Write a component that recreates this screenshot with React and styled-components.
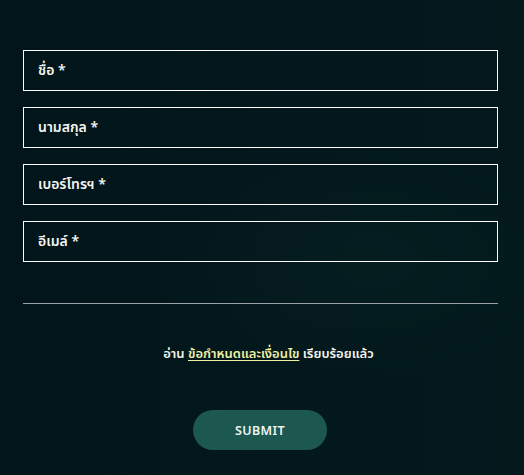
import React from "react";
import styled, { createGlobalStyle } from "styled-components";

const Global = createGlobalStyle`
  html, body { margin: 0; padding: 0; }
  body {
    background: #03171b;
    font-family: "Noto Sans Thai", "Noto Sans", "DejaVu Sans", sans-serif;
  }
`;

const Page = styled.div`
  width: 524px;
  height: 475px;
  box-sizing: border-box;
  padding: 50px 26px 0 23px;
  background:
    radial-gradient(ellipse 55% 35% at 70% 55%, rgba(18, 50, 50, 0.18), transparent 70%),
    linear-gradient(90deg, #02151a 0%, #03181c 50%, #03191c 100%);
  overflow: hidden;
`;

const Form = styled.form`
  display: flex;
  flex-direction: column;
  gap: 16px;
`;

const Field = styled.label`
  display: flex;
  align-items: center;
  height: 41px;
  box-sizing: border-box;
  border: 1px solid #ffffff;
  padding: 0 14px;
  color: #f4f5f2;
  font-size: 14px;
  font-weight: 600;
`;

const Divider = styled.hr`
  margin: 41px 0 0;
  border: none;
  height: 1px;
  background: #9aa3a3;
`;

const Terms = styled.p`
  margin: 40px 0 0;
  padding-left: 16px;
  text-align: center;
  color: #f4f5ec;
  font-size: 13px;
  font-weight: 600;
`;

const Link = styled.a`
  color: #eef0a4;
  text-decoration: underline;
  text-underline-offset: 2px;
`;

const ButtonRow = styled.div`
  display: flex;
  justify-content: center;
  margin-top: 46px;
`;

const Submit = styled.button`
  width: 134px;
  height: 40px;
  margin-left: -1px;
  border: none;
  border-radius: 20px;
  background: #1d5850;
  color: #eef4f2;
  font-family: "Noto Sans", sans-serif;
  font-size: 12.5px;
  font-weight: 600;
  letter-spacing: 0.4px;
`;

const fields = ["ชื่อ *", "นามสกุล *", "เบอร์โทรฯ *", "อีเมล์ *"];

export default function App() {
  return (
    <>
      <Global />
      <Page>
        <Form>
          {fields.map((f) => (
            <Field key={f}>{f}</Field>
          ))}
        </Form>
        <Divider />
        <Terms>
          อ่าน <Link>ข้อกำหนดและเงื่อนไข</Link> เรียบร้อยแล้ว
        </Terms>
        <ButtonRow>
          <Submit type="button">SUBMIT</Submit>
        </ButtonRow>
      </Page>
    </>
  );
}
